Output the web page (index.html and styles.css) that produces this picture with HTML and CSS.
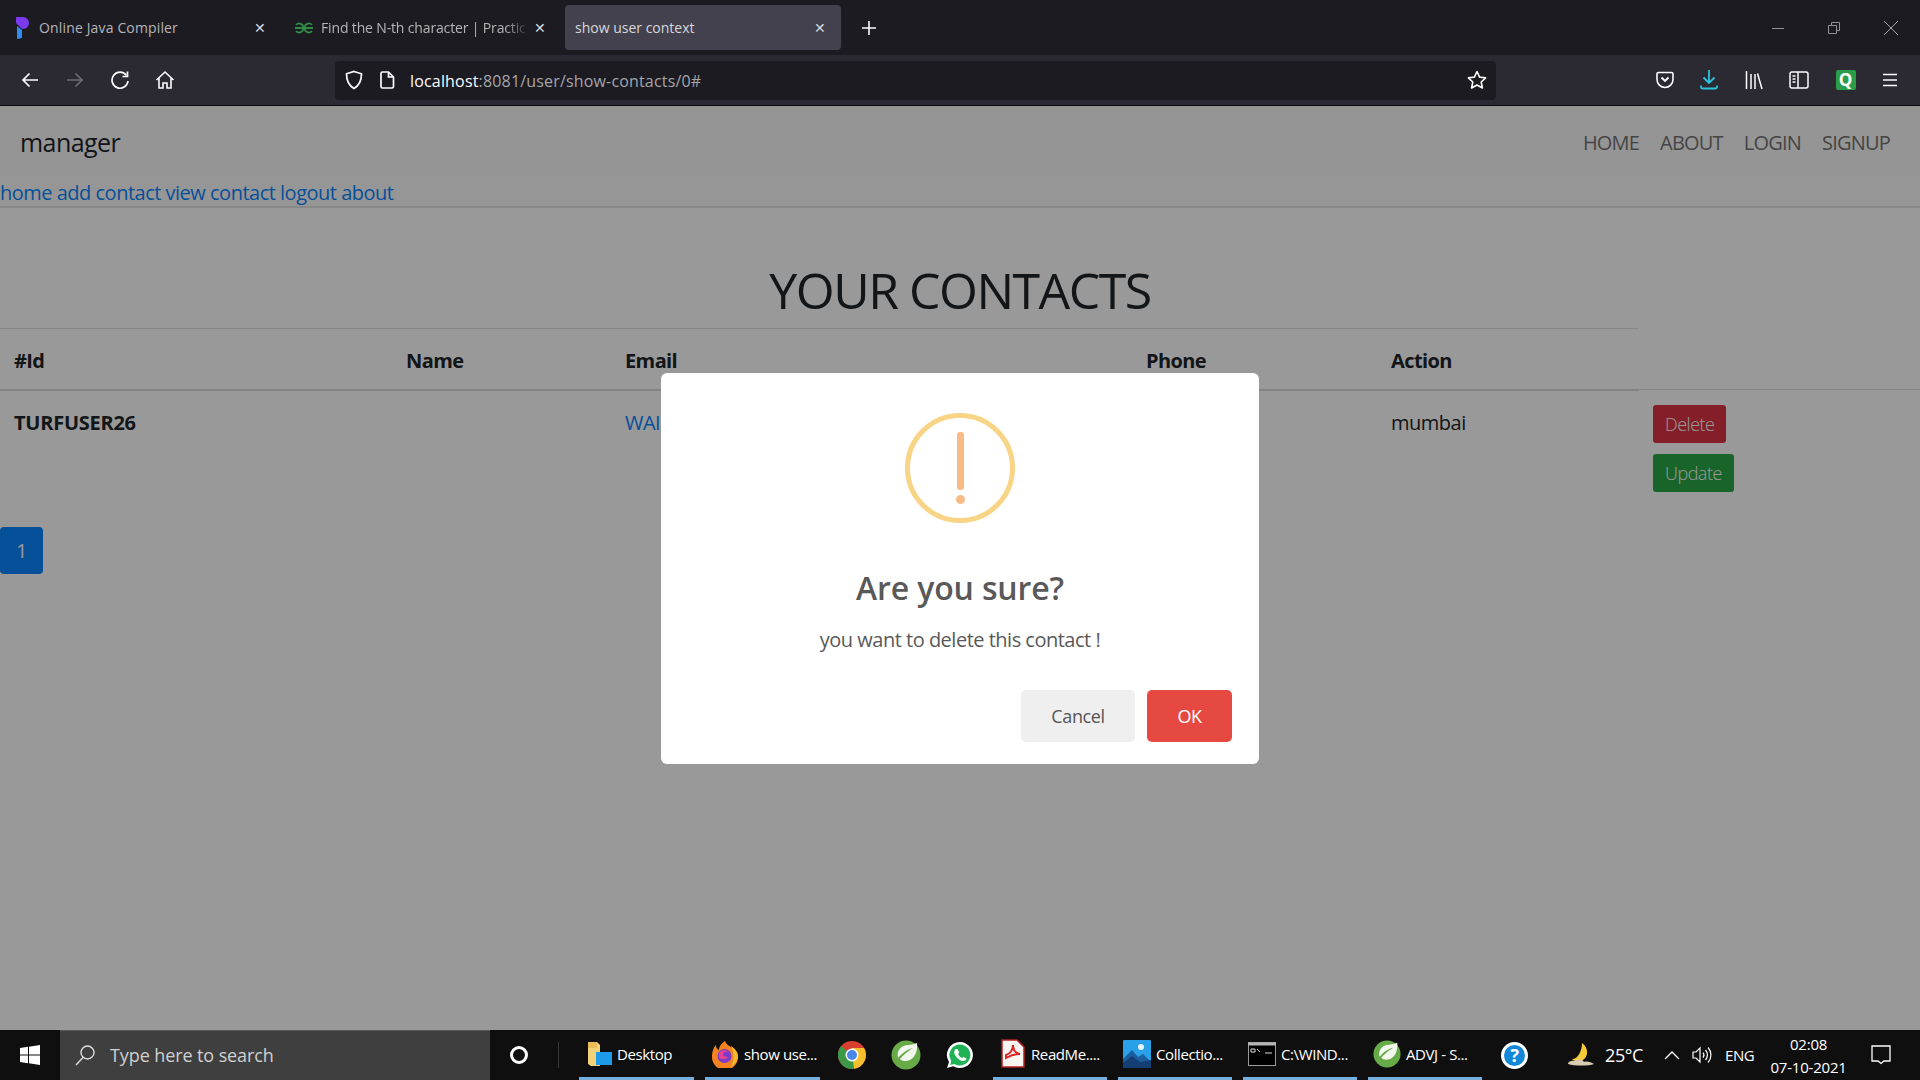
FILE: index.html
```html
<!DOCTYPE html>
<html lang="en">
<head>
  <meta charset="UTF-8">
  <meta name="viewport" content="width=device-width, initial-scale=1.0">
  <title>show user context</title>
  <link rel="stylesheet" href="styles.css">
</head>
<body>
  <div class="browser">
    <!-- tab strip -->
    <div class="tabstrip">
      <div class="tab">
        <svg class="favicon" width="16" height="24" viewBox="0 0 16 24"><path d="M2 1h7a6 6 0 0 1 6 6 6 6 0 0 1-6 6H8L2 7z" fill="#7c3aed"/><path d="M3 10l5 4v8l-5 1z" fill="#2f8cf0"/></svg>
        <span class="tab-title tab-first">Online Java Compiler</span>
        <span class="tab-close">✕</span>
      </div>
      <div class="tab">
        <svg class="favicon favicon-gfg" width="20" height="12" viewBox="0 0 20 12" fill="none" stroke="#2f8d46" stroke-width="1.800"><path d="M1 6h8.500A4.400 4.400 0 0 0 2 2.800M9.500 6A4.400 4.400 0 0 1 2 9.200"/><path d="M19 6h-8.500A4.400 4.400 0 0 1 18 2.800M10.500 6A4.400 4.400 0 0 0 18 9.200"/></svg>
        <span class="tab-title tab-fade">Find the N-th character | Practic</span>
        <span class="tab-close">✕</span>
      </div>
      <div class="tab tab-active">
        <span class="tab-title">show user context</span>
        <span class="tab-close">✕</span>
      </div>
      <svg class="newtab" width="16" height="16" viewBox="0 0 16 16" stroke="#fbfbfe" stroke-width="1.6"><path d="M8 1v14M1 8h14"/></svg>
      <div class="winbtns">
        <svg width="14" height="14" viewBox="0 0 14 14" stroke="#8f8f95" fill="none"><path d="M1 7.500h12"/></svg>
        <svg width="14" height="14" viewBox="0 0 14 14" stroke="#8f8f95" fill="none"><path d="M1.500 4.500h8v8h-8zM4.500 4V1.500h8v8H10"/></svg>
        <svg width="16" height="16" viewBox="0 0 16 16" stroke="#a5a5aa" fill="none"><path d="M1 1l14 14M15 1L1 15"/></svg>
      </div>
    </div>

    <!-- toolbar -->
    <div class="toolbar">
      <div class="navbtns">
        <svg width="20" height="20" viewBox="0 0 20 20" fill="none" stroke="#fbfbfe" stroke-width="1.7"><path d="M18 10H3M9.500 3.500L3 10l6.500 6.500"/></svg>
        <svg width="20" height="20" viewBox="0 0 20 20" fill="none" stroke="#6d6c75" stroke-width="1.7"><path d="M2 10h15M10.500 3.500L17 10l-6.500 6.500"/></svg>
        <svg width="20" height="20" viewBox="0 0 20 20" fill="none" stroke="#fbfbfe" stroke-width="1.7"><path d="M16.500 5.500A8 8 0 1 0 18 11"/><path d="M17.500 1.500v5h-5"/></svg>
        <svg width="20" height="20" viewBox="0 0 20 20" fill="none" stroke="#fbfbfe" stroke-width="1.6"><path d="M1.500 10L10 2l8.500 8M4 8v10h4v-5h4v5h4V8"/></svg>
      </div>
      <div class="urlbar">
        <svg class="url-shield" width="18" height="20" viewBox="0 0 18 20" fill="none" stroke="#fbfbfe" stroke-width="1.7"><path d="M9 1.500l7.500 2.300c0 7-2 11.700-7.500 14.700C3.500 15.500 1.500 10.800 1.500 3.800z"/></svg>
        <svg class="url-doc" width="15" height="18" viewBox="0 0 15 18" fill="none" stroke="#fbfbfe" stroke-width="1.7"><path d="M2.500 1h6l5 5v9.500a1.500 1.500 0 0 1-1.500 1.500H2.500A1.500 1.500 0 0 1 1 15.500v-13A1.500 1.500 0 0 1 2.500 1zM8.500 1v5h5"/></svg>
        <span class="url-text"><span class="url-host">localhost</span>:8081/user/show-contacts/0#</span>
        <svg class="url-star" width="20" height="20" viewBox="0 0 20 20" fill="none" stroke="#fbfbfe" stroke-width="1.6" stroke-linejoin="round"><path d="M10 1.500l2.600 5.600 6 .7-4.400 4.200 1.200 6L10 15l-5.400 3 1.200-6L1.400 7.800l6-.7z"/></svg>
      </div>
      <div class="toolicons">
        <svg width="18" height="18" viewBox="0 0 18 18" fill="none" stroke="#fbfbfe" stroke-width="1.6"><path d="M2.500 1.500h13A1.500 1.500 0 0 1 17 3v5.500a8 8 0 0 1-16 0V3a1.500 1.500 0 0 1 1.500-1.500z"/><path d="M5.500 6.500L9 10l3.500-3.500" stroke-width="1.900"/></svg>
        <svg width="18" height="20" viewBox="0 0 18 20" fill="none" stroke="#2bc4dd" stroke-width="1.800"><path d="M9 0v13M3.500 7.500L9 13l5.500-5.500M1 15.500v1.500a1.500 1.500 0 0 0 1.500 1.500h13A1.500 1.500 0 0 0 17 17v-1.500"/></svg>
        <svg width="18" height="20" viewBox="0 0 18 20" fill="none" stroke="#fbfbfe" stroke-width="1.500"><path d="M1.500 1v18M6 4v15M10 4v15M12.500 3.500l4.500 15.500"/></svg>
        <svg width="20" height="18" viewBox="0 0 20 18" fill="none" stroke="#fbfbfe" stroke-width="1.500"><rect x="1" y="1" width="18" height="16" rx="2"/><path d="M9 1v16M3.500 5h3M3.500 8h3M3.500 11h3"/></svg>
        <span class="qbadge">Q</span>
        <svg width="16" height="14" viewBox="0 0 16 14" fill="none" stroke="#fbfbfe" stroke-width="1.600"><path d="M1 1.500h14M1 7h14M1 12.500h14"/></svg>
      </div>
    </div>

    <!-- page -->
    <div class="page">
      <nav class="topnav">
        <span class="brand">manager</span>
        <div class="topnav-links">
          <a>HOME</a>
          <a>ABOUT</a>
          <a>LOGIN</a>
          <a>SIGNUP</a>
        </div>
      </nav>
      <div class="subnav">
        <a>home</a> <a>add contact</a> <a>view contact</a> <a>logout</a> <a>about</a>
      </div>

      <h1 class="heading">YOUR CONTACTS</h1>

      <table class="contacts">
        <colgroup>
          <col class="c-id"><col class="c-name"><col class="c-email"><col class="c-phone"><col class="c-action"><col class="c-btns">
        </colgroup>
        <thead>
          <tr>
            <th>#Id</th>
            <th>Name</th>
            <th>Email</th>
            <th>Phone</th>
            <th>Action</th>
            <th class="th-blank"></th>
          </tr>
        </thead>
        <tbody>
          <tr>
            <th>TURFUSER26</th>
            <td></td>
            <td><a class="email">WAI</a></td>
            <td></td>
            <td class="city">mumbai</td>
            <td class="btn-cell">
              <a class="btn btn-delete">Delete</a>
              <a class="btn btn-update">Update</a>
            </td>
          </tr>
        </tbody>
      </table>

      <a class="pager">1</a>

      <!-- sweetalert style dialog -->
      <div class="overlay">
        <div class="dialog">
          <div class="warn-icon">
            <span class="warn-bar"></span>
            <span class="warn-dot"></span>
          </div>
          <h2 class="dialog-title">Are you sure?</h2>
          <p class="dialog-text">you want to delete this contact !</p>
          <div class="dialog-footer">
            <button class="dlg-btn dlg-cancel">Cancel</button>
            <button class="dlg-btn dlg-ok">OK</button>
          </div>
        </div>
      </div>
    </div>

    <!-- windows taskbar -->
    <div class="taskbar">
      <div class="start">
        <svg width="20" height="20" viewBox="0 0 20 20" fill="#fff"><path d="M0 3l8-1.200v7.700H0zM9 1.700L20 0v9.500H9zM0 10.500h8v7.700L0 17zM9 10.500h11V20L9 18.300z"/></svg>
      </div>
      <div class="searchbox">
        <svg width="22" height="22" viewBox="0 0 22 22" fill="none" stroke="#ddd" stroke-width="1.400"><circle cx="13.500" cy="8.500" r="6.500"/><path d="M9 13.500L2 21"/></svg>
        <span>Type here to search</span>
      </div>
      <div class="cortana"><span class="ring"></span></div>
      <span class="task-sep"></span>

      <div class="task task-on task-desktop">
        <svg width="24" height="26" viewBox="0 0 24 26"><path d="M0 1h9l3 3v21H3l-3-2z" fill="#f3d27a"/><path d="M0 1h9v6H0z" fill="#e8bd5a"/><rect x="8" y="11" width="16" height="13" fill="#1e9be8"/></svg>
        <span>Desktop</span>
      </div>
      <div class="task task-on task-ff">
        <svg width="28" height="28" viewBox="0 0 28 28"><path d="M14 1c1 3 3 4 6 6 4 3 7 5 7 10a13 13 0 0 1-26 0C1 11 3 7 5 5c0 3 1 4 3 5 0-4 3-7 6-9z" fill="#f58220"/><path d="M20 6c3 2 7 5 7 11a13 13 0 0 1-8 10c4-4 5-12 1-21z" fill="#f5b82e"/><circle cx="13.500" cy="16" r="7" fill="#7b3bc9"/><path d="M8 13c2-3 7-4 10-1-3-1-5 0-6 2 0 2 2 3 5 3-2 3-7 3-9 0z" fill="#e8418f"/></svg>
        <span>show use...</span>
      </div>

      <div class="task-icon">
        <svg width="28" height="28" viewBox="0 0 28 28"><circle cx="14" cy="14" r="14" fill="#d9402f"/><path d="M14 14L1.900 21A14 14 0 0 0 14 28c.7 0 1.500 0 2.200-.2z" fill="#3a9a4a"/><path d="M14 14l2.200 13.800A14 14 0 0 0 26.100 7H14z" fill="#f5c02c"/><path d="M14 14L1.900 21A14 14 0 0 1 3 5z" fill="#3a9a4a"/><circle cx="14" cy="14" r="6.500" fill="#fff"/><circle cx="14" cy="14" r="5" fill="#4a86e8"/></svg>
      </div>
      <div class="task-icon">
        <svg class="leaf" width="30" height="30" viewBox="0 0 30 30"><use href="#spring"/></svg>
      </div>
      <div class="task-icon">
        <svg width="28" height="28" viewBox="0 0 28 28"><path d="M14 1a13 13 0 0 0-11 20L1 27l6.300-1.800A13 13 0 1 0 14 1z" fill="#fff"/><path d="M14 3.500a10.500 10.500 0 0 0-8.800 16.200L4.300 24l4-1.100A10.500 10.500 0 1 0 14 3.500z" fill="#1fb356"/><path d="M10 8c-1 .5-2 2-1.700 4 .5 3 4.500 7.500 8.500 8 2 .2 3.500-1 3.800-2.200l-3-2-1.500 1.300c-1.500-.5-3.500-2.500-4-4l1.200-1.500L11.500 8z" fill="#fff"/></svg>
      </div>

      <div class="task task-on task-pdf">
        <svg width="24" height="29" viewBox="0 0 24 29"><path d="M1 1h15l7 7v20H1z" fill="#f8f5f2" stroke="#b3201f" stroke-width="1.500"/><path d="M5 16c4-1 7-5 7-10 0 4 2 8 7 9-5 0-9 1-14 4z" fill="none" stroke="#d22" stroke-width="2"/></svg>
        <span>ReadMe....</span>
      </div>
      <div class="task task-on">
        <svg width="28" height="28" viewBox="0 0 28 28"><rect width="28" height="28" rx="1" fill="#2aa0e8"/><circle cx="18" cy="7" r="3" fill="#e8f4fc"/><path d="M0 28V19l9-9 6 7 5-3 8 8v6z" fill="#1c5f9e"/><path d="M0 28v-5l9-7 8 6 11-2v8z" fill="#143f73"/></svg>
        <span>Collectio...</span>
      </div>
      <div class="task task-on">
        <svg width="28" height="24" viewBox="0 0 28 24"><rect x=".5" y=".5" width="27" height="23" fill="#000" stroke="#9a9a9a"/><path d="M0 .5h28v3H0z" fill="#b5b5b5"/><path d="M3 7h4v3H3zM9 7l3 3M17 11h7" stroke="#ddd" fill="none"/></svg>
        <span>C:\WIND...</span>
      </div>
      <div class="task task-on">
        <svg width="28" height="30" viewBox="0 0 30 30"><g id="spring"><circle cx="15" cy="15" r="14.500" fill="#67ab48"/><path d="M26 3c1 9-3 17-10 18-3 .4-6-.5-7-2 4-5 10-9 13-11-5 1-11 5-15 10-2-8 4-13 10-13 3 0 6-1 9-2z" fill="#f2f7ee"/></g></svg>
        <span>ADVJ - S...</span>
      </div>
      <div class="task-help"><span>?</span></div>

      <div class="tray">
        <svg class="moon" width="28" height="26" viewBox="0 0 28 26"><path d="M15 1c7 5 7 15-1 18-4 1-7 0-9-2 6 0 10-8 10-16z" fill="#f5cb3c"/><path d="M1 22c0-3 5-4 7-3 2-3 8-2 9 1 3-1 7 0 10 2-5 2-20 2-26 0z" fill="#d8cdb0"/></svg>
        <span class="temp">25°C</span>
        <svg class="chev" width="16" height="10" viewBox="0 0 16 10" fill="none" stroke="#fff" stroke-width="1.300"><path d="M1 9l7-7 7 7"/></svg>
        <svg class="speaker" width="20" height="18" viewBox="0 0 20 18" fill="none" stroke="#fff" stroke-width="1.200"><path d="M1 6h3l4-4v14l-4-4H1zM11 6.500a4 4 0 0 1 0 5M13.500 4a7.500 7.500 0 0 1 0 10M16 1.500a11 11 0 0 1 0 15"/></svg>
        <span class="lang">ENG</span>
        <div class="clock">
          <span>02:08</span>
          <span>07-10-2021</span>
        </div>
        <svg class="notif" width="20" height="20" viewBox="0 0 20 20" fill="none" stroke="#fff" stroke-width="1.300"><path d="M1 1h18v15h-6l-3 2.500L7 16H1z"/></svg>
      </div>
    </div>
  </div>
</body>
</html>
```

FILE: styles.css
```css
* {
  box-sizing: border-box;
}
html, body {
  margin: 0;
  height: 100%;
  overflow: hidden;
}
body {
  font-family: "Open Sans", "Noto Sans", sans-serif;
  background-color: #000;
}
.browser {
  display: flex;
  flex-direction: column;
  height: 1080px;
}

/* tabs */
.tabstrip {
  display: flex;
  align-items: center;
  gap: 4px;
  height: 55px;
  flex-shrink: 0;
  padding-left: 5px;
  background-color: #1c1b22;
}
.tab {
  display: flex;
  align-items: center;
  width: 276px;
  height: 45px;
  padding: 0 14px 0 9px;
  border-radius: 4px;
  color: #b5b5b9;
  font-size: 14px;
  line-height: 20px;
}
.tab-active {
  padding-left: 10px;
  background-color: #42414d;
  color: #d8d8dc;
}
.favicon {
  flex-shrink: 0;
  margin-right: 9px;
}
.favicon-gfg {
  margin-right: 7px;
}
.tab-title {
  flex: 1;
  padding-top: 1px;
  overflow: hidden;
  white-space: nowrap;
}
.tab-first {
  letter-spacing: 0.15px;
}
.tab-fade {
  letter-spacing: -0.15px;
  -webkit-mask-image: linear-gradient(to right, #000 88%, transparent 100%);
}
.tab-close {
  width: 14px;
  margin-left: 3px;
  font-size: 14px;
  text-align: center;
  color: #d8d8dc;
}
.newtab {
  margin-left: 16px;
}
.winbtns {
  display: flex;
  align-items: center;
  gap: 42px;
  margin-left: auto;
  padding-right: 21px;
}

/* toolbar */
.toolbar {
  display: flex;
  align-items: center;
  height: 51px;
  flex-shrink: 0;
  background-color: #2b2a33;
  border-bottom: 1px solid #0c0c0d;
}
.navbtns {
  display: flex;
  align-items: center;
  gap: 25px;
  width: 335px;
  padding-left: 20px;
}
.urlbar {
  display: flex;
  align-items: center;
  width: 1161px;
  height: 39px;
  padding: 0 9px 0 10px;
  border-radius: 4px;
  background-color: #1c1b22;
}
.url-doc {
  margin-left: 17px;
}
.url-text {
  flex: 1;
  margin-left: 15px;
  padding-top: 2px;
  font-size: 16px;
  letter-spacing: 0.17px;
  color: #a5a5aa;
}
.url-host {
  color: #fbfbfe;
}
.toolicons {
  display: flex;
  align-items: center;
  justify-content: space-between;
  flex: 1;
  padding: 0 22px 0 160px;
}
.qbadge {
  width: 20px;
  height: 20px;
  border-radius: 2px;
  background-color: #2a9d4a;
  color: #fff;
  font-size: 17px;
  font-weight: 700;
  line-height: 20px;
  text-align: center;
}

/* page behind the dialog */
.page {
  position: relative;
  flex: 1;
  background-color: #fff;
  font-size: 20px;
  color: #212529;
  letter-spacing: -0.45px;
}
.topnav {
  display: flex;
  align-items: center;
  justify-content: space-between;
  height: 70px;
  padding: 2px 30px 0 20px;
  background-color: #f8f9fa;
}
.brand {
  font-size: 25px;
  letter-spacing: -0.55px;
}
.topnav-links {
  display: flex;
  gap: 21px;
  color: #737373;
  letter-spacing: -0.8px;
}
.subnav {
  height: 32px;
  line-height: 33px;
  background-color: #fbfbfb;
  border-bottom: 2px solid #e4e4e4;
  color: #0a85ff;
  letter-spacing: -0.5px;
}
.heading {
  margin: 52px 0 8px;
  font-size: 50px;
  font-weight: 400;
  line-height: 60px;
  text-align: center;
  letter-spacing: -1.5px;
}
.contacts {
  width: 1920px;
  table-layout: fixed;
  border-collapse: collapse;
}
.c-id { width: 392px; }
.c-name { width: 219px; }
.c-email { width: 521px; }
.c-phone { width: 245px; }
.c-action { width: 262px; }
.c-btns { width: 281px; }
.contacts th, .contacts td {
  padding: 18px 14px 15px;
  text-align: left;
  vertical-align: top;
  font-weight: 700;
  letter-spacing: -0.25px;
}
.contacts thead th {
  height: 61px;
  padding-top: 18px;
  padding-bottom: 12px;
  border-top: 1px solid #e2e2e2;
  border-bottom: 2px solid #d9d9d9;
  letter-spacing: -0.6px;
}
.contacts thead .th-blank {
  border-top: 0;
  border-bottom: 1px solid #dedede;
}
.contacts td {
  font-weight: 400;
  letter-spacing: -0.5px;
}
.email {
  color: #0a85ff;
}
.contacts .btn-cell {
  padding-top: 15px;
}
.btn {
  display: block;
  width: fit-content;
  height: 38px;
  margin-bottom: 11px;
  padding: 0 12px;
  border-radius: 3px;
  font-size: 18px;
  line-height: 39px;
  color: #fff;
  font-weight: 300;
}
.btn-delete {
  background-color: #dc3545;
}
.btn-update {
  background-color: #28a745;
}
.pager {
  display: block;
  width: 43px;
  height: 47px;
  margin-top: 9px;
  border-radius: 4px;
  background-color: #0a85ff;
  color: #fff;
  line-height: 48px;
  text-align: center;
}

/* dialog */
.overlay {
  position: absolute;
  top: 0;
  left: 0;
  right: 0;
  bottom: 0;
  display: flex;
  align-items: center;
  justify-content: center;
  background-color: rgba(0, 0, 0, 0.4);
}
.dialog {
  width: 598px;
  height: 391px;
  padding: 40px 27px 22px;
  border-radius: 6px;
  background-color: #fff;
  text-align: center;
  color: #595959;
  letter-spacing: 0;
}
.warn-icon {
  display: flex;
  flex-direction: column;
  align-items: center;
  justify-content: center;
  gap: 5px;
  width: 110px;
  height: 110px;
  margin: 0 auto;
  border: 5px solid #f8d486;
  border-radius: 50%;
}
.warn-bar {
  width: 7px;
  height: 58px;
  border-radius: 3px;
  background-color: #f8bb86;
}
.warn-dot {
  width: 9px;
  height: 9px;
  border-radius: 50%;
  background-color: #f8bb86;
}
.dialog-title {
  margin: 45px 0 0;
  font-size: 32px;
  font-weight: 600;
  line-height: 40px;
  letter-spacing: -0.15px;
}
.dialog-text {
  margin: 18px 0 0;
  font-size: 20px;
  line-height: 28px;
  letter-spacing: -0.5px;
}
.dialog-footer {
  display: flex;
  justify-content: flex-end;
  gap: 12px;
  margin-top: 36px;
}
.dlg-btn {
  height: 52px;
  border: 0;
  border-radius: 5px;
  font-family: inherit;
  font-size: 18px;
  letter-spacing: -0.4px;
}
.dlg-cancel {
  width: 114px;
  background-color: #efefef;
  color: #555;
}
.dlg-ok {
  width: 85px;
  background-color: #e64942;
  color: #fff;
}

/* taskbar */
.taskbar {
  display: flex;
  align-items: center;
  height: 50px;
  flex-shrink: 0;
  background-color: #0f0f0f;
  color: #fff;
  font-size: 15px;
  letter-spacing: -0.4px;
}
.start {
  display: flex;
  align-items: center;
  justify-content: center;
  width: 60px;
}
.searchbox {
  display: flex;
  align-items: center;
  gap: 14px;
  width: 430px;
  height: 50px;
  padding-left: 14px;
  padding-bottom: 2px;
  background-color: #3f3f3f;
  border-top: 1px solid #5a5a5a;
  font-size: 18px;
  letter-spacing: -0.1px;
  color: #d0d0d0;
}
.cortana {
  display: flex;
  justify-content: center;
  width: 58px;
}
.ring {
  width: 18px;
  height: 18px;
  border: 3px solid #fff;
  border-radius: 50%;
}
.task-sep {
  width: 1px;
  height: 26px;
  margin: 0 20px 0 10px;
  background-color: #3a3a3a;
}
.task {
  display: flex;
  align-items: center;
  gap: 5px;
  width: 114px;
  height: 50px;
  padding-left: 5px;
  margin-right: 11px;
  white-space: nowrap;
}
.task svg {
  flex-shrink: 0;
}
.task-on {
  border-bottom: 3px solid #76b0de;
}
.task-desktop {
  width: 115px;
  padding-left: 9px;
}
.task-ff {
  width: 115px;
  padding-left: 6px;
  margin-right: 5px;
}
.task-icon {
  display: flex;
  align-items: center;
  justify-content: center;
  width: 54px;
  height: 50px;
}
.task-pdf {
  gap: 6px;
  padding-left: 8px;
  margin-left: 6px;
}
.task-help {
  display: flex;
  align-items: center;
  justify-content: center;
  width: 27px;
  height: 27px;
  margin-left: 8px;
  border: 3px solid #fff;
  border-radius: 50%;
  background-color: #1587d8;
  font-size: 18px;
  font-weight: 700;
}
.tray {
  display: flex;
  align-items: center;
  flex: 1;
  padding-left: 39px;
}
.temp {
  margin-left: 10px;
  font-size: 18px;
}
.chev {
  margin-left: 21px;
}
.speaker {
  margin-left: 12px;
}
.lang {
  margin-left: 13px;
}
.clock {
  display: flex;
  flex-direction: column;
  align-items: center;
  gap: 3px;
  margin-left: 16px;
  line-height: 20px;
  letter-spacing: -0.2px;
}
.notif {
  margin-left: 24px;
}
```
